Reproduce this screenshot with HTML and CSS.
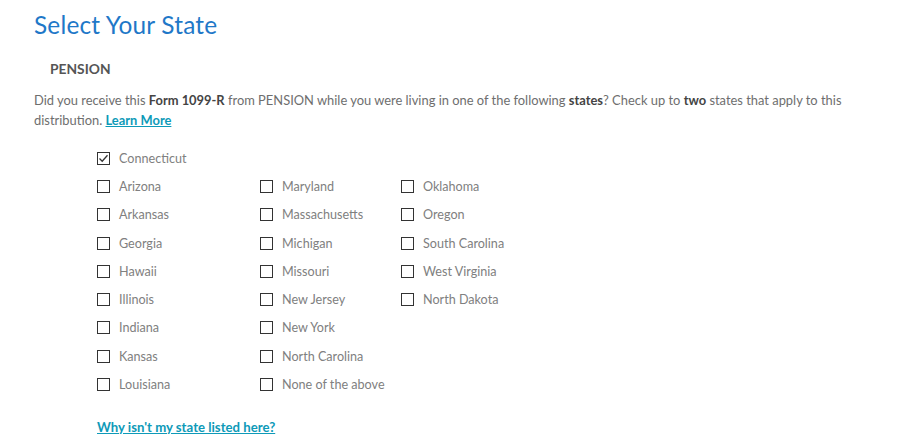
FILE: index.html
```html
<!DOCTYPE html>
<html>
<head>
<meta charset="utf-8">
<link rel="stylesheet" href="styles.css">
</head>
<body>
<div class="page">
  <h1 class="title">Select Your State</h1>
  <h2 class="subtitle">PENSION</h2>
  <p class="intro">Did you receive this <b>Form 1099-R</b> from PENSION while you were living in one of the following <b>states</b>? Check up to <b>two</b> states that apply to this distribution. <a class="link" href="#">Learn More</a></p>
  <div class="options">
    <label class="opt first"><span class="box checked"><svg viewBox="0 0 13 13" width="13" height="13"><path d="M2.5 6.5 L5.2 9.2 L10.5 3.2" fill="none" stroke="#333" stroke-width="1.3"/></svg></span><span class="lbl">Connecticut</span></label>
    <div class="grid">
      <div class="col c1">
        <label class="opt"><span class="box"></span><span class="lbl">Arizona</span></label>
        <label class="opt"><span class="box"></span><span class="lbl">Arkansas</span></label>
        <label class="opt"><span class="box"></span><span class="lbl">Georgia</span></label>
        <label class="opt"><span class="box"></span><span class="lbl">Hawaii</span></label>
        <label class="opt"><span class="box"></span><span class="lbl">Illinois</span></label>
        <label class="opt"><span class="box"></span><span class="lbl">Indiana</span></label>
        <label class="opt"><span class="box"></span><span class="lbl">Kansas</span></label>
        <label class="opt"><span class="box"></span><span class="lbl">Louisiana</span></label>
      </div>
      <div class="col c2">
        <label class="opt"><span class="box"></span><span class="lbl">Maryland</span></label>
        <label class="opt"><span class="box"></span><span class="lbl">Massachusetts</span></label>
        <label class="opt"><span class="box"></span><span class="lbl">Michigan</span></label>
        <label class="opt"><span class="box"></span><span class="lbl">Missouri</span></label>
        <label class="opt"><span class="box"></span><span class="lbl">New Jersey</span></label>
        <label class="opt"><span class="box"></span><span class="lbl">New York</span></label>
        <label class="opt"><span class="box"></span><span class="lbl">North Carolina</span></label>
        <label class="opt"><span class="box"></span><span class="lbl">None of the above</span></label>
      </div>
      <div class="col c3">
        <label class="opt"><span class="box"></span><span class="lbl">Oklahoma</span></label>
        <label class="opt"><span class="box"></span><span class="lbl">Oregon</span></label>
        <label class="opt"><span class="box"></span><span class="lbl">South Carolina</span></label>
        <label class="opt"><span class="box"></span><span class="lbl">West Virginia</span></label>
        <label class="opt"><span class="box"></span><span class="lbl">North Dakota</span></label>
      </div>
    </div>
    <a class="link why" href="#">Why isn't my state listed here?</a>
  </div>
</div>
</body>
</html>
```
FILE: styles.css
```css
html, body { margin: 0; padding: 0; background: #fff; }
body { font-family: "Lato", "Open Sans", sans-serif; color: #6b6b6b; }
.page { padding: 10px 0 0 34px; }
.title { margin: 0; font-weight: 400; font-size: 24.4px; line-height: 30px; color: #1f78c8; letter-spacing: 0.2px; }
.subtitle { margin: 21px 0 0 16px; font-size: 13.8px; font-weight: 700; line-height: 16px; color: #555; }
.intro { margin: 13px 0 0 0; font-size: 12.9px; line-height: 20px; color: #6e6e6e; max-width: 840px; }
.intro b { color: #444; font-weight: 700; }
.link { color: #0e9ab8; font-weight: 700; text-decoration: underline; }
.options { margin: 14px 0 0 63px; display: flex; flex-direction: column; }
.opt { display: flex; align-items: center; height: 28.3px; font-size: 12.6px; color: #808080; }
.box { width: 11px; height: 11px; border: 1px solid #333; margin-right: 9px; display: flex; flex: none; }
.box svg { margin: -1px; }
.grid { display: flex; }
.c1 { width: 163px; }
.c2 { width: 141px; }
.col { display: flex; flex-direction: column; }
.why { margin-top: 20px; font-size: 13.2px; line-height: 16px; }
```
